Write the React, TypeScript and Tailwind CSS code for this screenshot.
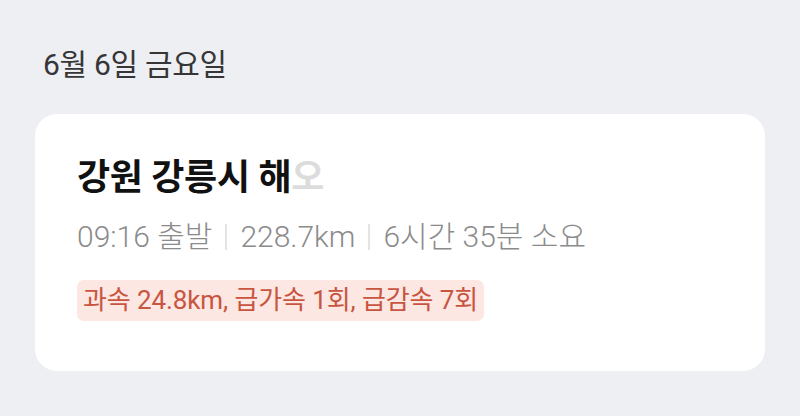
import React from "react";

const font = { fontFamily: 'Roboto, "Noto Sans CJK KR", "Noto Sans", sans-serif' };

export default function App() {
    return (
        <div className="w-[800px] h-[416px] bg-[#eeeff3] pt-[43px] px-[35px]" style={font}>
            <p className="pl-[8px] text-[30px] leading-[44px] text-[#363638] tracking-[-0.3px]">6월 6일 금요일</p>
            <div className="mt-[27px] bg-white rounded-[22px] h-[257px] pl-[42px] pt-[41px]">
                <p className="text-[36px] leading-[46px] font-bold text-[#111111] tracking-[-0.3px]">
                    강원 강릉시 해<span className="text-[#dcdcdc]">오</span>
                </p>
                <div className="mt-[16px] flex items-center text-[30px] leading-[40px] font-light text-[#8b8b8b]">
                    <span>09:16 출발</span>
                    <span className="mx-[13px] w-[2px] h-[26px] bg-[#e4e4e4]" />
                    <span>228.7km</span>
                    <span className="mx-[13px] w-[2px] h-[26px] bg-[#e4e4e4]" />
                    <span>6시간 35분 소요</span>
                </div>
                <div className="mt-[23px] inline-flex items-center h-[41px] px-[6px] rounded-[7px] bg-[#fde7e3] text-[26px] text-[#c8553f] tracking-[-0.1px]">
                    과속 24.8km, 급가속 1회, 급감속 7회
                </div>
            </div>
        </div>
    );
}
